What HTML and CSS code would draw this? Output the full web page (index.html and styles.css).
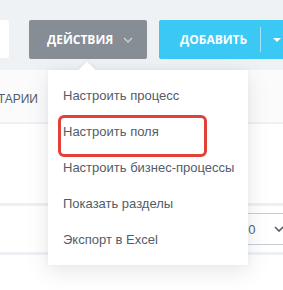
FILE: index.html
```html
<!DOCTYPE html>
<html lang="ru">
  <head>
    <meta charset="UTF-8" />
    <meta name="viewport" content="width=device-width, initial-scale=1.0" />
    <title>Список</title>
    <link rel="stylesheet" href="styles.css">
  </head>
  <body>
    <!-- Панель кнопок -->
    <div class="toolbar">
      <div class="search"></div>
      <button class="btn btn-gray">
        Действия
        <svg class="chevron" width="10" height="6" viewBox="0 0 10 6">
          <path d="M1 1 L5 5 L9 1" fill="none" stroke="currentColor" stroke-width="1.3" />
        </svg>
      </button>
      <div class="btn btn-blue">
        <span class="btn-main">Добавить</span>
        <span class="btn-sep"></span>
        <span class="btn-menu">
          <svg width="8" height="4" viewBox="0 0 8 4">
            <path d="M0 0 L8 0 L4 4 Z" fill="currentColor" />
          </svg>
        </span>
      </div>
    </div>

    <!-- Таблица за меню -->
    <div class="grid">
      <div class="grid-head">
        <div class="grid-cell">Комментарии</div>
      </div>
      <div class="grid-body"></div>
      <div class="grid-footer">
        <div class="page-size">
          <span class="page-size-value">20</span>
          <svg class="page-size-arrow" width="10" height="6" viewBox="0 0 10 6">
            <path d="M1 1 L5 5 L9 1" fill="none" stroke="currentColor" stroke-width="1.6" />
          </svg>
        </div>
      </div>
    </div>

    <!-- Выпадающее меню -->
    <div class="popup">
      <div class="popup-angle"></div>
      <div class="popup-item">Настроить процесс</div>
      <div class="popup-item">Настроить поля</div>
      <div class="popup-item">Настроить бизнес-процессы</div>
      <div class="popup-item">Показать разделы</div>
      <div class="popup-item">Экспорт в Excel</div>
    </div>

    <div class="highlight"></div>
  </body>
</html>
```

FILE: styles.css
```css
body {
  margin: 0;
  width: 283px;
  height: 290px;
  overflow: hidden;
  background-color: #eef2f4;
  font-family: "Liberation Sans", Arial, sans-serif;
  position: relative;
}

.toolbar {
  display: flex;
  padding-top: 20px;
  height: 39px;
  white-space: nowrap;
}

.search {
  width: 9px;
  height: 38px;
  flex-shrink: 0;
  background-color: #fff;
  border-radius: 0 2px 2px 0;
}

.btn {
  height: 39px;
  border: none;
  border-radius: 2px;
  color: #fff;
  font-family: "Open Sans", "Liberation Sans", sans-serif;
  font-size: 12px;
  font-weight: bold;
  text-transform: uppercase;
  display: flex;
  align-items: center;
  flex-shrink: 0;
  box-sizing: border-box;
}

.btn-gray {
  margin-left: 20px;
  width: 118px;
  padding: 0 14px 0 18px;
  background-color: #868d95;
  justify-content: space-between;
}

.chevron {
  color: rgba(255, 255, 255, 0.6);
}

.btn-blue {
  margin-left: 12px;
  width: 140px;
  background-color: #3bc8f5;
}

.btn-main {
  padding-left: 21px;
  width: 80px;
}

.btn-sep {
  width: 1px;
  height: 25px;
  background-color: rgba(255, 255, 255, 0.55);
}

.btn-menu {
  padding-left: 12px;
  display: flex;
  align-items: center;
}

.grid {
  margin-top: 11px;
  background-color: #fff;
  height: 230px;
}

.grid-head {
  height: 52px;
  display: flex;
  align-items: center;
  border-bottom: 2px solid #eef0f3;
  background-color: #fbfbfc;
}

.grid-cell {
  width: 38px;
  display: flex;
  justify-content: flex-end;
  white-space: nowrap;
  font-size: 12px;
  color: #535c69;
  text-transform: uppercase;
  padding-top: 6px;
}

.grid-body {
  height: 79px;
}

.grid-footer {
  height: 46px;
  border-top: 3px solid #eef0f3;
  border-bottom: 3px solid #eef0f3;
  display: flex;
  align-items: center;
  justify-content: flex-end;
}

.page-size {
  width: 90px;
  height: 30px;
  margin-right: -20px;
  border-top: 1px solid #c6cdd3;
  border-bottom: 1px solid #c6cdd3;
  display: flex;
  align-items: center;
  font-size: 13px;
  color: #535c69;
}

.page-size-value {
  padding-left: 28px;
}

.page-size-arrow {
  margin-left: 19px;
  color: #535c69;
}

.popup {
  position: absolute;
  left: 48px;
  top: 70px;
  width: 200px;
  padding: 8px 0 7px;
  background-color: #fff;
  box-shadow: 0 7px 21px rgba(83, 92, 105, 0.14), 0 -1px 6px rgba(83, 92, 105, 0.06);
}

.popup-angle {
  position: absolute;
  left: 33px;
  top: -6px;
  width: 12px;
  height: 12px;
  background-color: #fff;
  transform: rotate(45deg);
  box-shadow: -1px -1px 3px rgba(83, 92, 105, 0.06);
}

.popup-item {
  position: relative;
  height: 36px;
  line-height: 36px;
  padding-left: 15px;
  font-size: 13px;
  color: #535c69;
  white-space: nowrap;
}

.highlight {
  position: absolute;
  left: 58px;
  top: 115px;
  width: 143px;
  height: 36px;
  border: 3px solid #e2413a;
  border-radius: 6px;
}
```
